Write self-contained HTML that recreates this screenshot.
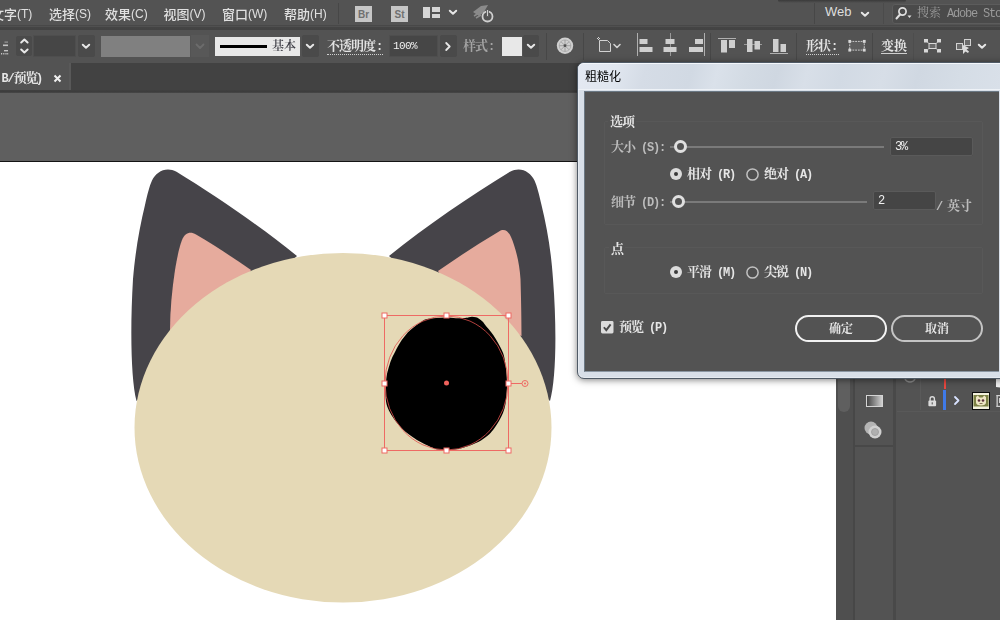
<!DOCTYPE html>
<html lang="zh-CN">
<head>
<meta charset="utf-8">
<title>粗糙化</title>
<style>
*{box-sizing:border-box;margin:0;padding:0}
html,body{width:1000px;height:620px;overflow:hidden;background:#5f5f5f}
body{position:relative;font-family:"Liberation Sans","Noto Sans CJK SC",sans-serif;font-size:12px;color:#ddd}
.abs{position:absolute}
#work{left:0;top:93px;width:1000px;height:527px;background:#5f5f5f}
#artboard{left:0;top:161px;width:836px;height:459px;background:#fff;border-top:1px solid #141414}
#rpanel{left:836px;top:93px;width:164px;height:527px;background:#535353}
.mi{top:0;height:27px;line-height:28px;font-size:12px;color:#e0e0e0;white-space:nowrap;letter-spacing:0}
.mi .c{font-family:"Liberation Sans","Noto Sans CJK SC",sans-serif;font-size:13px;font-weight:500;position:relative;top:0.5px}

#dlg{left:577px;top:62px;width:440px;height:317px;border:1px solid #4f5a66;border-bottom-width:1.500px;border-radius:7px;background:#d8dfe8;box-shadow:0 0 0 1px rgba(255,255,255,.35) inset,0 1px 7px rgba(0,0,0,.5)}
#dlgtitle{filter:blur(0.300px);left:585px;top:69px;font:12px/17px "Liberation Sans","Noto Sans CJK SC",sans-serif;color:#000}
#dlgbody{left:584px;top:90.500px;width:415px;height:281.500px;background:#535353;border:1px solid #6b7884;border-bottom-color:#8b97a3;border-right:none}
.l{font-family:"Liberation Mono",monospace;font-size:12px;letter-spacing:-1.200px;font-weight:bold}
.dim{color:#bcbcbc !important}
.sim{font-family:"Liberation Mono","Noto Serif CJK SC",serif;font-size:13px;letter-spacing:-1px;line-height:14px;color:#e6e6e6;white-space:nowrap;font-weight:700}
.grp{border:1px solid #585858;border-radius:2px}
.knob{width:13px;height:13px;border-radius:50%;border:3px solid #e0e0e0;background:#535353}
.track{height:2px;background:#7a7a7a}
.inp{background:#454545;border:1px solid #5a5a5a;border-radius:2px;color:#f0f0f0;font:12px/16px "Liberation Mono",monospace;letter-spacing:-1.200px;padding-left:4px}
.radio{width:12px;height:12px;border-radius:50%}
.radio.on{background:#dcdcdc;border:none}
.radio.on::after{content:"";position:absolute;left:4px;top:4px;width:4px;height:4px;border-radius:50%;background:#3a3a3a}
.radio.off{border:1.500px solid #bdbdbd;background:#505050;width:13px;height:13px}
.btn{height:27px;border-radius:14px;text-align:center;font:bold 12px/25px "Liberation Sans","Noto Serif CJK SC",serif;color:#e8e8e8}

#menubar{left:0;top:0;width:1000px;height:27px;background:#535353;border:none}
#mline{left:0;top:25px;width:1000px;height:5px;background:linear-gradient(#484848 0,#484848 20%,#505050 20%,#505050 50%,#444 50%,#434343 90%,#4a4a4a 100%)}
#ctrlbar{left:0;top:30px;width:1000px;height:33px;background:#535353;border:none}
#tabbar{left:0;top:63px;width:1000px;height:30px;background:#424242}
#tabline{left:0;top:90px;width:1000px;height:3px;background:linear-gradient(#404040 0,#3c3c3c 60%,#4a4a4a 100%)}
#tab{left:0;top:63px;width:71px;height:27px;background:#535353;border-right:2px solid #595959}
.vsep{width:1px;background:#474747}
.cbtn{background:#4a4a4a;border-radius:2px}
.cinp{background:#464646;border:1px solid #4e4e4e}
.ctext{font-family:"Liberation Mono","Noto Serif CJK SC",serif;font-size:13px;letter-spacing:-1px;line-height:14px;color:#e2e2e2;white-space:nowrap;font-weight:bold}
.sim,.ctext,.mi,.btn,.inp,.cinp{filter:blur(0.350px)}
.sim .l{margin-left:-1.500px}
.sim .l:first-child{margin-left:0}
</style>
</head>
<body>
<div id="work" class="abs"></div>
<div id="artboard" class="abs"></div>
<svg id="art" class="abs" style="left:0;top:161px" width="835" height="459" viewBox="0 161 835 459">
<path d="M136.5 401C131 380 130 330 133 279C135.5 250 139.5 228 145 205C147.5 194 149.5 186 152 180.5C156 171.5 166.5 166 176.5 171.8C215 195.5 260 226 297 256L250 300Z" fill="#464449"/>
<path d="M550 401C556 380 557 330 553 279C551 250 547 228 541.5 205C539 194 537 186 534.5 180.5C530.5 171.5 520 166 510 171.8C471 195.5 426 226 389 256L436 300Z" fill="#464449"/>
<path d="M170 331C170 310 172 290 175 270C177 258 179 248 182 240C185 233 190 231 196 234.500C214 245 232 257 251 270L220 320Z" fill="#e6ab9d"/>
<path d="M521.500 336C521.500 315 521 295 520.500 279C519.500 262 515 246 511 237C508.500 231 504 228 499 231.500C478 244 458 257 438 271L470 320Z" fill="#e6ab9d"/>
<ellipse cx="343" cy="427.700" rx="208.500" ry="174.800" fill="#e5d9b6"/>
<path d="M507.0 383.0C507.1 387.2 506.8 390.5 506.5 394.0C506.2 397.5 506.1 400.8 505.5 404.0C504.9 407.2 504.1 410.2 503.0 413.0C501.9 415.8 500.4 418.5 499.0 421.0C497.6 423.5 496.2 425.7 494.5 428.0C492.8 430.3 491.2 432.5 489.0 434.6C486.8 436.7 483.8 438.8 481.0 440.5C478.2 442.2 474.8 443.6 472.0 444.8C469.2 446.0 466.8 446.7 464.0 447.5C461.2 448.3 458.0 449.1 455.0 449.5C452.0 449.9 448.8 450.0 446.0 450.0C443.2 450.0 440.3 449.9 438.0 449.5C435.7 449.1 434.0 448.3 432.0 447.5C430.0 446.7 428.5 446.1 426.0 444.8C423.5 443.6 419.8 441.7 417.0 440.0C414.2 438.3 411.6 436.6 409.0 434.6C406.4 432.6 403.8 430.3 401.5 428.0C399.2 425.7 397.4 423.6 395.5 421.0C393.6 418.4 391.5 415.3 390.0 412.5C388.5 409.7 387.2 407.1 386.5 404.0C385.8 400.9 385.6 397.5 385.5 394.0C385.4 390.5 385.8 386.3 386.0 383.0C386.2 379.7 386.4 377.0 387.0 374.0C387.6 371.0 388.7 367.7 389.5 365.0C390.3 362.3 391.0 360.3 392.0 358.0C393.0 355.7 394.1 353.7 395.5 351.0C396.9 348.3 398.7 344.8 400.5 342.0C402.3 339.2 404.8 336.1 406.5 334.0C408.2 331.9 409.4 330.9 411.0 329.5C412.6 328.1 414.3 326.8 416.0 325.5C417.7 324.2 419.3 323.0 421.0 322.0C422.7 321.0 423.5 320.0 426.0 319.3C428.5 318.6 432.7 318.3 436.0 318.0C439.3 317.7 442.7 317.5 446.0 317.5C449.3 317.5 452.8 318.1 456.0 318.2C459.2 318.3 462.8 318.2 465.0 318.0C467.2 317.8 467.8 317.4 469.0 317.2C470.2 317.0 470.8 316.8 472.0 316.8C473.2 316.8 474.8 317.0 476.0 317.3C477.2 317.6 477.9 318.0 479.0 318.7C480.1 319.4 481.4 320.4 482.5 321.5C483.6 322.6 484.2 323.8 485.6 325.5C487.0 327.2 489.3 329.8 491.0 332.0C492.7 334.2 494.2 336.4 495.8 339.0C497.4 341.6 499.1 344.7 500.5 347.5C501.9 350.3 503.1 352.4 504.0 356.0C504.9 359.6 505.5 364.5 506.0 369.0C506.5 373.5 506.9 378.8 507.0 383.0Z" fill="#000"/>
<ellipse cx="446.500" cy="383" rx="61.500" ry="67" fill="none" stroke="#e0504c" stroke-width="0.800"/>
<g fill="none" stroke="#ee6a64" stroke-width="1">
<rect x="384.500" y="315.500" width="124" height="135"/>
<line x1="509" y1="383.500" x2="522" y2="383.500"/>
<circle cx="525" cy="383.500" r="3"/>
</g>
<circle cx="525" cy="383.500" r="1" fill="#ee6a64"/>
<circle cx="446.500" cy="383" r="2.500" fill="#f0625c"/>
<g fill="#fff" stroke="#ee6a64" stroke-width="1">
<rect x="382" y="313" width="5" height="5"/><rect x="444" y="313" width="5" height="5"/><rect x="506" y="313" width="5" height="5"/>
<rect x="382" y="381" width="5" height="5"/><rect x="506" y="381" width="5" height="5"/>
<rect x="382" y="448" width="5" height="5"/><rect x="444" y="448" width="5" height="5"/><rect x="506" y="448" width="5" height="5"/>
</g>
</svg>
<div id="rpanel" class="abs"></div>
<div id="menubar" class="abs"></div>
<div id="ctrlbar" class="abs"></div>

<div id="mline" class="abs"></div>
<div class="abs mi" style="left:-9px"><span class="c">文字</span>(T)</div>
<div class="abs mi" style="left:49px"><span class="c">选择</span>(S)</div>
<div class="abs mi" style="left:105px"><span class="c">效果</span>(C)</div>
<div class="abs mi" style="left:163.5px"><span class="c">视图</span>(V)</div>
<div class="abs mi" style="left:222px"><span class="c">窗口</span>(W)</div>
<div class="abs mi" style="left:284px"><span class="c">帮助</span>(H)</div>
<div class="abs vsep" style="left:338px;top:3px;height:21px"></div>
<div class="abs" style="left:355px;top:6px;width:17px;height:16px;background:#c6c6c6;color:#707070;font:bold 10px/17px 'Liberation Sans',sans-serif;text-align:center;letter-spacing:0">Br</div>
<div class="abs" style="left:391px;top:6px;width:17px;height:16px;background:#c6c6c6;color:#707070;font:bold 10px/17px 'Liberation Sans',sans-serif;text-align:center;letter-spacing:0">St</div>
<svg class="abs" style="left:423px;top:7px" width="18" height="12" viewBox="0 0 18 12"><rect x="0" y="0" width="7" height="11" fill="#d6d6d6"/><rect x="9" y="0" width="8" height="5" fill="#d6d6d6"/><rect x="9" y="7" width="8" height="4" fill="#d6d6d6"/></svg>
<svg class="abs" style="left:448px;top:9px" width="10" height="7" viewBox="0 0 10 7"><path d="M1.800 1.800L5 4.800L8.200 1.800" fill="none" stroke="#e6e6e6" stroke-width="2" stroke-linecap="round" stroke-linejoin="round"/></svg>
<svg class="abs" style="left:471px;top:3px" width="24" height="22" viewBox="0 0 24 22"><path d="M2 9L10 3L17 2L13 9L8 13Z" fill="#8a8a8a"/><path d="M3 13L8 10M5 15L10 12" stroke="#8a8a8a" stroke-width="1.500"/><circle cx="16.500" cy="13.500" r="5" fill="none" stroke="#cfcfcf" stroke-width="1.800"/><rect x="15.600" y="6.500" width="1.800" height="7" fill="#cfcfcf" stroke="#535353" stroke-width="0.800"/></svg>
<div class="abs vsep" style="left:814px;top:3px;height:21px"></div>
<div class="abs vsep" style="left:883px;top:3px;height:21px;background:#4b4b4b"></div>
<div class="abs" style="left:825px;top:0;font:13px/24px 'Liberation Sans',sans-serif;color:#dedede">Web</div>
<svg class="abs" style="left:860px;top:11px" width="10" height="7" viewBox="0 0 10 7"><path d="M1.800 1.800L5 4.800L8.200 1.800" fill="none" stroke="#e6e6e6" stroke-width="2" stroke-linecap="round" stroke-linejoin="round"/></svg>
<div class="abs" style="left:892px;top:4px;width:112px;height:20px;background:#4a4a4a;border:1px solid #5c5c5c;border-radius:3px"></div>
<svg class="abs" style="left:895px;top:6px" width="18" height="15" viewBox="0 0 18 15"><circle cx="7.500" cy="5.500" r="3.600" fill="none" stroke="#e0e0e0" stroke-width="1.700"/><path d="M5 8.500L1.500 12.500" stroke="#e0e0e0" stroke-width="2" stroke-linecap="round"/><path d="M12.500 9.500h4l-2 2.500z" fill="#e0e0e0"/></svg>
<div class="abs" style="left:917px;top:6px;filter:blur(0.350px);font:12px/16px 'Liberation Mono','Noto Serif CJK SC',serif;color:#9a9a9a;white-space:nowrap"><span>搜索</span><span style="margin-left:6px;letter-spacing:-1.200px">Adobe Sto</span></div>
<div class="abs" style="left:778px;top:0;width:128px;height:3px;background:linear-gradient(#3a3a3a,rgba(83,83,83,0));border-radius:0 0 3px 3px"></div>

<svg class="abs" style="left:0;top:40px" width="9" height="16" viewBox="0 0 9 16"><g fill="#c4c4c4"><rect x="4.500" y="1.500" width="3.500" height="1.200" fill="#9a9a9a"/><rect x="3" y="4.500" width="5" height="1.600"/><rect x="4" y="10" width="4" height="1.400"/><rect x="1" y="13" width="1.200" height="1.500"/><rect x="3.200" y="13" width="1.200" height="1.500"/><rect x="5.400" y="13" width="1.200" height="1.500"/><rect x="7.200" y="13" width="1" height="1.500"/></g></svg>
<div class="abs cbtn" style="left:16px;top:36px;width:16px;height:20px"></div>
<svg class="abs" style="left:16px;top:35px" width="16" height="22" viewBox="0 0 16 22"><path d="M5.200 7.500L8.400 4.500L11.600 7.500M5.200 14.500L8.400 17.500L11.600 14.500" fill="none" stroke="#e8e8e8" stroke-width="2" stroke-linecap="round" stroke-linejoin="round"/></svg>
<div class="abs cinp" style="left:33px;top:35px;width:43px;height:22px"></div>
<div class="abs cbtn" style="left:78px;top:35px;width:17px;height:22px"></div>
<svg class="abs" style="left:81px;top:43px" width="10" height="7" viewBox="0 0 10 7"><path d="M1.800 1.800L5 4.800L8.200 1.800" fill="none" stroke="#e6e6e6" stroke-width="2" stroke-linecap="round" stroke-linejoin="round"/></svg>
<div class="abs" style="left:101px;top:36px;width:89px;height:21px;background:#808080"></div>
<div class="abs" style="left:191px;top:35px;width:18px;height:22px;background:#585858"></div>
<svg class="abs" style="left:195px;top:43px" width="10" height="7" viewBox="0 0 10 7"><path d="M1.500 1.500L5 5L8.500 1.500" fill="none" stroke="#6c6c6c" stroke-width="1.800" stroke-linecap="round" stroke-linejoin="round"/></svg>
<div class="abs" style="left:215px;top:37px;width:85px;height:19px;background:#e8e8e8"></div>
<div class="abs" style="left:220px;top:45px;width:47px;height:3px;background:#000"></div>
<div class="abs" style="left:272px;top:40px;filter:blur(0.300px);font:12px/14px 'Liberation Mono','Noto Serif CJK SC',serif;color:#3c3c44;font-weight:600">基本</div>
<div class="abs cbtn" style="left:302px;top:35px;width:17px;height:22px"></div>
<svg class="abs" style="left:305px;top:43px" width="10" height="7" viewBox="0 0 10 7"><path d="M1.800 1.800L5 4.800L8.200 1.800" fill="none" stroke="#e6e6e6" stroke-width="2" stroke-linecap="round" stroke-linejoin="round"/></svg>
<div class="abs ctext" style="left:327px;top:40px;border-bottom:1px dotted #cfcfcf;height:15px;width:56px">不透明度<span style="margin-left:1px;letter-spacing:-1px;font-size:12px">:</span></div>
<div class="abs cinp" style="left:389px;top:35px;width:49px;height:22px;color:#f0f0f0;font:11px/21px 'Liberation Mono',monospace;letter-spacing:-0.600px;padding-left:3px">100%</div>
<div class="abs cbtn" style="left:440px;top:35px;width:17px;height:22px"></div>
<svg class="abs" style="left:444px;top:41px" width="8" height="11" viewBox="0 0 8 11"><path d="M2.200 2L5.700 5.500L2.200 9" fill="none" stroke="#e6e6e6" stroke-width="1.800" stroke-linecap="round" stroke-linejoin="round"/></svg>
<div class="abs ctext" style="left:463px;top:40px;color:#a4a4a4">样式<span style="margin-left:1px;letter-spacing:-1px;font-size:12px">:</span></div>
<div class="abs" style="left:502px;top:37px;width:20px;height:19px;background:#e8e8e8"></div>
<div class="abs cbtn" style="left:523px;top:35px;width:16px;height:22px"></div>
<svg class="abs" style="left:526px;top:43px" width="10" height="7" viewBox="0 0 10 7"><path d="M1.800 1.800L5 4.800L8.200 1.800" fill="none" stroke="#e6e6e6" stroke-width="2" stroke-linecap="round" stroke-linejoin="round"/></svg>
<div class="abs vsep" style="left:546px;top:33px;height:27px"></div>
<svg class="abs" style="left:555px;top:36px" width="20" height="20" viewBox="0 0 20 20"><circle cx="10" cy="9.700" r="8.200" fill="#d0d0d0"/><circle cx="10" cy="9.700" r="5.800" fill="none" stroke="#9a9a9a" stroke-width="0.600"/><g stroke="#8c8c8c" stroke-width="0.700"><path d="M10 4V15.400M4.300 9.700H15.700M6 5.700L14 13.700M14 5.700L6 13.700"/></g><circle cx="10" cy="9.700" r="1.400" fill="#505050"/></svg>
<div class="abs vsep" style="left:583px;top:33px;height:27px"></div>
<svg class="abs" style="left:595px;top:36px" width="28" height="20" viewBox="0 0 28 20"><path d="M4.500 4.500H12.500L15.500 7.500V15.500H4.500Z" fill="#5e5e5e" stroke="#d2d2d2" stroke-width="1"/><path d="M2 2.500h3M3.500 1v3" stroke="#d2d2d2" stroke-width="1" stroke-dasharray="1 1"/><path d="M19 8.500L22 11.500L25 8.500" fill="none" stroke="#d2d2d2" stroke-width="1.600" stroke-linecap="round" stroke-linejoin="round"/></svg>
<svg class="abs" style="left:630px;top:30px" width="165" height="32" viewBox="630 30 165 32"><g fill="#cfcfcf">
<rect x="637" y="33" width="1" height="23" fill="#b0b0b0"/><rect x="639.500" y="39" width="8" height="5"/><rect x="639.500" y="47" width="13" height="5"/>
<rect x="670" y="33" width="1" height="23" fill="#9a9a9a"/><rect x="665.500" y="39" width="9" height="5"/><rect x="663.500" y="47" width="13" height="5"/>
<rect x="704" y="33" width="1" height="23" fill="#b0b0b0"/><rect x="695" y="39" width="8" height="5"/><rect x="689" y="47" width="14" height="5"/>
<rect x="718" y="38" width="18" height="1" fill="#b0b0b0"/><rect x="721" y="40" width="6" height="12.500"/><rect x="729" y="40" width="6" height="8"/>
<rect x="744" y="44" width="18" height="1" fill="#9a9a9a"/><rect x="747" y="39" width="5.500" height="13"/><rect x="754.500" y="41" width="5.500" height="8.500"/>
<rect x="770" y="53" width="18" height="1" fill="#b0b0b0"/><rect x="773" y="39" width="5.500" height="13"/><rect x="780.500" y="44" width="5.500" height="8"/>
</g><rect x="710" y="33" width="1" height="27" fill="#474747"/></svg>
<div class="abs vsep" style="left:796px;top:33px;height:27px"></div>
<div class="abs ctext" style="left:806px;top:40px;border-bottom:1px dotted #cfcfcf;height:15px;width:33px">形状<span style="margin-left:1px;letter-spacing:-1px;font-size:12px">:</span></div>
<svg class="abs" style="left:847px;top:38px" width="20" height="15.500" viewBox="0 0 22 16" preserveAspectRatio="none"><rect x="3" y="3.500" width="16" height="9" fill="#5e5e5e" stroke="#d2d2d2" stroke-width="1" stroke-dasharray="2 1"/><g fill="#d8d8d8"><rect x="1.500" y="2" width="3" height="3"/><rect x="17.500" y="2" width="3" height="3"/><rect x="1.500" y="11" width="3" height="3"/><rect x="17.500" y="11" width="3" height="3"/></g></svg>
<div class="abs vsep" style="left:872px;top:33px;height:27px"></div>
<div class="abs ctext" style="left:881px;top:40px;border-bottom:1px solid #cfcfcf;height:14px;width:26px;letter-spacing:0">变换</div>
<div class="abs vsep" style="left:913px;top:33px;height:27px;background:#4d4d4d"></div>
<svg class="abs" style="left:923px;top:38px" width="19" height="16" viewBox="0 0 19 16"><g fill="#d8d8d8"><rect x="1" y="1" width="4" height="3.500"/><rect x="14" y="1" width="4" height="3.500"/><rect x="1" y="11" width="4" height="3.500"/><rect x="14" y="11" width="4" height="3.500"/></g><rect x="6" y="5.500" width="7" height="5" fill="#6a6a6a" stroke="#d8d8d8" stroke-width="1"/><path d="M4 4L6 5.500M15 4L13 5.500M4 12L6 10.500M15 12L13 10.500" stroke="#bdbdbd" stroke-width="1"/></svg>
<svg class="abs" style="left:954px;top:36px" width="20" height="20" viewBox="0 0 20 20"><rect x="2.500" y="7.500" width="6" height="6" fill="#6a6a6a" stroke="#d2d2d2"/><rect x="10.500" y="3.500" width="6" height="6" fill="#6a6a6a" stroke="#d2d2d2"/><path d="M9 9L9 18L11.500 15.500L14 17L15 15.500L12.500 13.500L15 12Z" fill="#dcdcdc"/></svg>
<svg class="abs" style="left:977px;top:43px" width="10" height="7" viewBox="0 0 10 7"><path d="M1.800 1.800L5 4.800L8.200 1.800" fill="none" stroke="#e6e6e6" stroke-width="2" stroke-linecap="round" stroke-linejoin="round"/></svg>
<div id="tabbar" class="abs"></div>
<div id="tab" class="abs"></div><div id="tabline" class="abs"></div>
<div class="abs sim" style="left:1.500px;top:72px"><span class="l">B/</span>预览<span class="l">)</span></div>
<svg class="abs" style="left:52.500px;top:73.500px" width="9" height="9" viewBox="0 0 9 9"><path d="M1.500 1.500L7.500 7.500M7.500 1.500L1.500 7.500" stroke="#f0f0f0" stroke-width="2"/></svg>



<div class="abs" style="left:836px;top:379px;width:17px;height:241px;background:#4f4f4f"></div>
<div class="abs" style="left:838px;top:370px;width:12px;height:42px;background:#5f5f5f;border-radius:6px"></div>
<div class="abs" style="left:853px;top:379px;width:2px;height:241px;background:#474747"></div>
<div class="abs" style="left:855px;top:445px;width:39px;height:2px;background:#484848"></div>
<div class="abs" style="left:892.500px;top:379px;width:3.500px;height:241px;background:#494949"></div>
<div class="abs" style="left:897px;top:411px;width:103px;height:1px;background:#595959"></div>
<div class="abs" style="left:920px;top:379px;width:1px;height:31px;background:#5a5a5a"></div>
<div class="abs" style="left:866px;top:395px;width:17px;height:12px;border:1px solid #d4d4d4;background:linear-gradient(90deg,#444,#cfcfcf)"></div>
<svg class="abs" style="left:862px;top:419px" width="24" height="22" viewBox="0 0 24 22"><circle cx="9" cy="9" r="6.500" fill="#b4b4b4"/><circle cx="13" cy="13" r="6.500" fill="#d0d0d0"/><circle cx="13" cy="13" r="3.500" fill="#b0b0b0" stroke="#9a9a9a" stroke-width="0.800"/></svg>
<svg class="abs" style="left:903px;top:379px" width="16" height="6" viewBox="0 0 16 6"><path d="M2 0C4 4 10 4 12 0" fill="none" stroke="#8a8a8a" stroke-width="1.500"/></svg>
<svg class="abs" style="left:926.500px;top:395px" width="10.500" height="12" viewBox="0 0 12 14"><path d="M3.500 7V4.500a2.500 2.500 0 0 1 5 0V7" fill="none" stroke="#dcdcdc" stroke-width="1.600"/><rect x="1.500" y="6.500" width="9" height="6.500" rx="1" fill="#dcdcdc"/><rect x="5.300" y="8.500" width="1.400" height="2.500" fill="#666"/></svg>
<div class="abs" style="left:943.500px;top:379px;width:2.500px;height:10px;background:#e8473f"></div>
<div class="abs" style="left:943px;top:390px;width:3px;height:20px;background:#3f7ae8"></div>
<svg class="abs" style="left:952px;top:395px" width="9" height="12" viewBox="0 0 9 12"><path d="M3 2L6.500 5.500L3 9" fill="none" stroke="#d8e2ff" stroke-width="1.800" stroke-linecap="round" stroke-linejoin="round"/></svg>
<svg class="abs" style="left:972px;top:392px" width="18" height="18" viewBox="0 0 18 18"><rect x="0.500" y="0.500" width="17" height="17" fill="#f3f1dc" stroke="#0c0c0c" stroke-width="1"/><rect x="1.500" y="3" width="15" height="11.500" fill="#7c8144"/><path d="M4 5L5.800 3.500L7.500 5.500H10.500L12.200 3.500L14 5V10.500C14 12.500 12 13.500 9 13.500S4 12.500 4 10.500Z" fill="#eee6c4"/><circle cx="7" cy="8.500" r="1.300" fill="#5a2f3a"/><circle cx="11" cy="8.500" r="1.300" fill="#5a2f3a"/><rect x="7.500" y="11" width="3" height="0.800" fill="#6a5a3a"/></svg>
<svg class="abs" style="left:996px;top:394px" width="4" height="14" viewBox="0 0 4 14"><g fill="#cfcfcf"><rect x="0.500" y="1" width="1.300" height="12"/><rect x="0.500" y="1" width="3.500" height="1.200"/><rect x="0.500" y="11.800" width="3.500" height="1.200"/><rect x="3" y="4" width="1" height="5"/></g></svg>
<svg class="abs" style="left:995px;top:379px" width="5" height="10" viewBox="0 0 5 10"><path d="M1 0H5V8.500L1 8Z" fill="#f2f2f2"/></svg>
<div id="dlg" class="abs"></div>
<div class="abs" style="left:578px;top:63px;width:422px;height:27px;border-radius:6px 0 0 0;border-top:1px solid #f4f7fb;border-bottom:1px solid #eef2f7;background:linear-gradient(105deg,#e4e9f2 0,#e0e6ef 9%,#d5dce6 16%,#d1d9e3 27%,#dae1ea 33%,#d3dbe4 40%,#cfd7e1 47%,#d8dfe8 54%,#d2dae4 62%,#d7dee7 72%,#d0d8e2 80%,#d5dde6 90%,#d9e0e9 100%)"></div>
<div id="dlgbody" class="abs"></div>
<div id="dlgtitle" class="abs">粗糙化</div>
<div class="abs grp" style="left:604px;top:121px;width:379px;height:104px"></div>
<div class="abs sim" style="left:608px;top:116px;background:#535353;padding:0 2px">选项</div>
<div class="abs sim dim" style="left:611px;top:141px">大小<span class="l"> (S):</span></div>
<div class="abs track" style="left:670px;top:145.500px;width:214px"></div>
<div class="abs knob" style="left:674px;top:140px"></div>
<div class="abs inp" style="left:890px;top:137px;width:83px;height:19px;line-height:18px">3%</div>
<div class="abs radio on" style="left:670px;top:168px"></div>
<div class="abs sim" style="left:687px;top:168px">相对<span class="l"> (R)</span></div>
<svg class="abs" style="left:746px;top:168px" width="13" height="13" viewBox="0 0 13 13"><circle cx="6.500" cy="6.500" r="5.600" fill="#4f4f4f" stroke="#c2c2c2" stroke-width="1.500"/></svg>
<div class="abs sim" style="left:764px;top:168px">绝对<span class="l"> (A)</span></div>
<div class="abs sim dim" style="left:611px;top:196px">细节<span class="l"> (D):</span></div>
<div class="abs track" style="left:670px;top:200.500px;width:197px"></div>
<div class="abs knob" style="left:672px;top:195px"></div>
<div class="abs inp" style="left:873px;top:191px;width:63px;height:19px;line-height:18px">2</div>
<div class="abs sim dim" style="left:936px;top:200px"><span class="l">/</span><span style="margin-left:5px">英寸</span></div>
<div class="abs grp" style="left:604px;top:247px;width:379px;height:47px"></div>
<div class="abs sim" style="left:609px;top:243px;background:#535353;padding:0 2px">点</div>
<div class="abs radio on" style="left:670px;top:266px"></div>
<div class="abs sim" style="left:687px;top:266px">平滑<span class="l"> (M)</span></div>
<svg class="abs" style="left:746px;top:266px" width="13" height="13" viewBox="0 0 13 13"><circle cx="6.500" cy="6.500" r="5.600" fill="#4f4f4f" stroke="#c2c2c2" stroke-width="1.500"/></svg>
<div class="abs sim" style="left:764px;top:266px">尖锐<span class="l"> (N)</span></div>
<svg class="abs" style="left:601px;top:321px" width="12.500" height="12.500" viewBox="0 0 13 13"><rect width="13" height="13" rx="1.500" fill="#dcdcdc"/><path d="M3 6.500L5.500 9.500L10 3.500" fill="none" stroke="#4a4a4a" stroke-width="2"/></svg>
<div class="abs sim" style="left:619px;top:321px">预览<span class="l"> (P)</span></div>
<div class="abs btn" style="left:795px;top:315px;width:92px;border:2px solid #f2f2f2">确定</div>
<div class="abs btn" style="left:891px;top:315px;width:92px;border:2px solid #c4c4c4;line-height:25px">取消</div>
</body>
</html>
